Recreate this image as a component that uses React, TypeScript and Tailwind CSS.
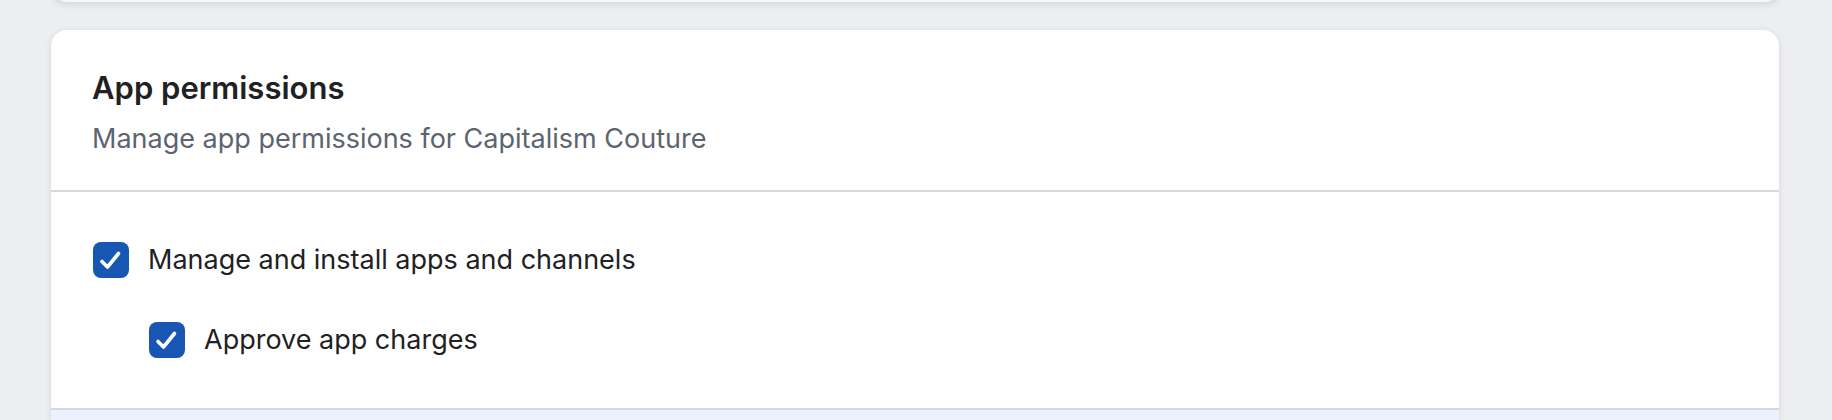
import React from "react";

function Check() {
  return (
    <span className="flex h-[36px] w-[36px] shrink-0 items-center justify-center rounded-[8px] bg-[#1756b3]">
      <svg width="36" height="36" viewBox="0 0 36 36" fill="none">
        <path d="M9 19.5 L14.5 25 L25.5 11.5" stroke="#ffffff" strokeWidth="3.6" strokeLinecap="round" strokeLinejoin="round" />
      </svg>
    </span>
  );
}

export default function App() {
  return (
    <div className="h-[420px] w-full overflow-hidden bg-[#edeef0] font-['Inter','Noto_Sans',sans-serif]">
      <div className="mx-[51px] -mt-[20px] h-[22px] rounded-b-[16px] bg-[#f6f6f7] shadow-[0_2px_8px_rgba(0,0,0,0.12)]" />
      <div className="mr-[53px] ml-[51px] mt-[28px] overflow-hidden rounded-t-[16px] bg-white shadow-[0_1px_6px_rgba(0,0,0,0.1)]">
        <div className="px-[41px] pb-[35px] pt-[40px]">
          <h2 className="text-[31px] font-semibold leading-[36px] text-[#1f2124]">App permissions</h2>
          <p className="mt-[17px] text-[27px] leading-[32px] text-[#5b6470]">Manage app permissions for Capitalism Couture</p>
        </div>
        <div className="h-[2px] bg-[#d5d9de]" />
        <div className="flex flex-col gap-[44px] px-[42px] py-[50px]">
          <div className="flex items-center gap-[19px]">
            <Check />
            <span className="text-[27px] leading-[36px] text-[#1f2124]">Manage and install apps and channels</span>
          </div>
          <div className="ml-[56px] flex items-center gap-[19px]">
            <Check />
            <span className="text-[27px] leading-[36px] text-[#1f2124]">Approve app charges</span>
          </div>
        </div>
        <div className="h-[2px] bg-[#d5d9de]" />
        <div className="h-[40px] bg-[#ebf2fd]" />
      </div>
    </div>
  );
}
